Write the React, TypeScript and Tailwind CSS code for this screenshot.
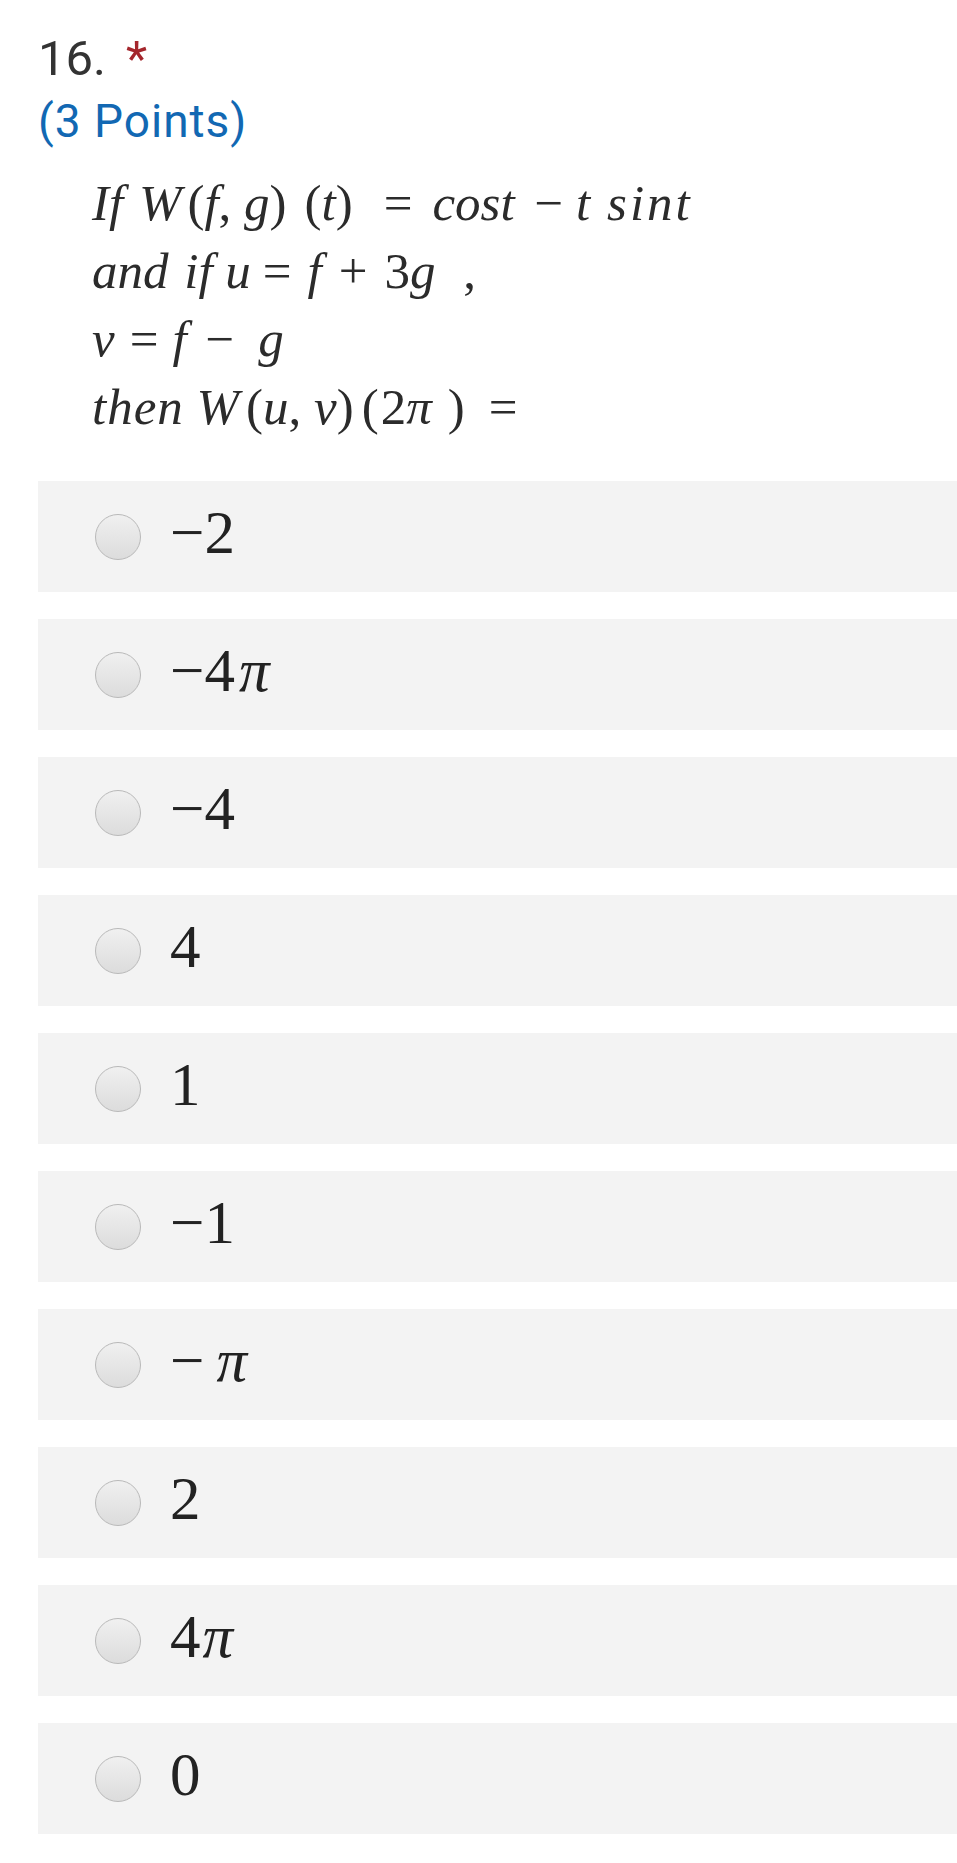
import React from "react";

const serif = "font-['Liberation_Serif','Times_New_Roman',serif]";

const Pi = () => <span className="italic">π</span>;

const options: { id: string; label: React.ReactNode }[] = [
  { id: "a", label: <>−2</> },
  { id: "b", label: <>−4<span className="ml-[4px]"><Pi /></span></> },
  { id: "c", label: <>−4</> },
  { id: "d", label: <>4</> },
  { id: "e", label: <>1</> },
  { id: "f", label: <>−1</> },
  { id: "g", label: <>−<span className="ml-[12px]"><Pi /></span></> },
  { id: "h", label: <>2</> },
  { id: "i", label: <>4<span className="ml-[2px]"><Pi /></span></> },
  { id: "j", label: <>0</> },
];

const Radio = () => (
  <span className="block w-[46px] h-[46px] rounded-full border border-[#b9b9b9] bg-gradient-to-b from-[#f0f0f0] to-[#dcdcdc] shrink-0" />
);

export default function App() {
  return (
    <div className="min-h-[1863px] bg-white overflow-hidden">
      {/* question header */}
      <div className="pt-[30px] pl-[38px] font-['Roboto',sans-serif]">
        <div className="text-[49px] leading-[57px] text-[#333333]">
          16.
          <span className="ml-[20px] text-[#a4262c]">*</span>
        </div>
        <div className="mt-[7px] text-[46px] leading-[54px] tracking-[1px] text-[#1268b3]">
          (3 Points)
        </div>
      </div>

      {/* question body */}
      <div className={`${serif} mt-[21px] pl-[92px] text-[51px] leading-[68px] text-[#2b2b2b]`}>
        <div className="whitespace-nowrap">
          <i>If</i>{" "}
          <i className="ml-[3px]">W</i>
          <span className="ml-[6px]">(</span>
          <i>f</i>,{" "}
          <i>g</i>)
          <span className="ml-[18px]">(</span>
          <i>t</i>)
          <span className="ml-[31px] mr-[20px]">=</span>
          <i>cost</i>
          <span className="ml-[20px]">−</span>{" "}
          <i>t</i>{" "}
          <i className="ml-[4px] tracking-[3px]">sint</i>
        </div>
        <div className="whitespace-nowrap">
          <i>and</i>{" "}
          <i className="ml-[3px]">if</i>{" "}
          <i>u</i>
          <span className="ml-[12px] mr-[16px]">=</span>
          <i>f</i>
          <span className="ml-[17px] mr-[17px]">+</span>
          3<i>g</i>{" "}
          <span className="ml-[15px]">,</span>
        </div>
        <div className="whitespace-nowrap">
          <i>v</i>
          <span className="ml-[15px] mr-[14px]">=</span>
          <i>f</i>
          <span className="ml-[19px] mr-[24px]">−</span>
          <i>g</i>
        </div>
        <div className="whitespace-nowrap">
          <i className="tracking-[1px]">then</i>{" "}
          <i>W</i>
          <span className="ml-[7px]">(</span>
          <i>u</i>,{" "}
          <i>v</i>)
          <span className="ml-[8px]">(</span>
          <span className="ml-[2px]">2</span>
          <Pi />
          <span className="ml-[16px]">)</span>
          <span className="ml-[24px]">=</span>
        </div>
      </div>

      {/* choices */}
      <div className="mt-[40px] pl-[38px] flex flex-col gap-[27px]">
        {options.map((o) => (
          <label
            key={o.id}
            className="h-[111px] bg-[#f3f3f3] flex items-center pl-[57px]"
          >
            <Radio />
            <span className={`${serif} ml-[29px] mb-[8px] text-[61px] leading-[68px] text-[#222222]`}>
              {o.label}
            </span>
          </label>
        ))}
      </div>
    </div>
  );
}
